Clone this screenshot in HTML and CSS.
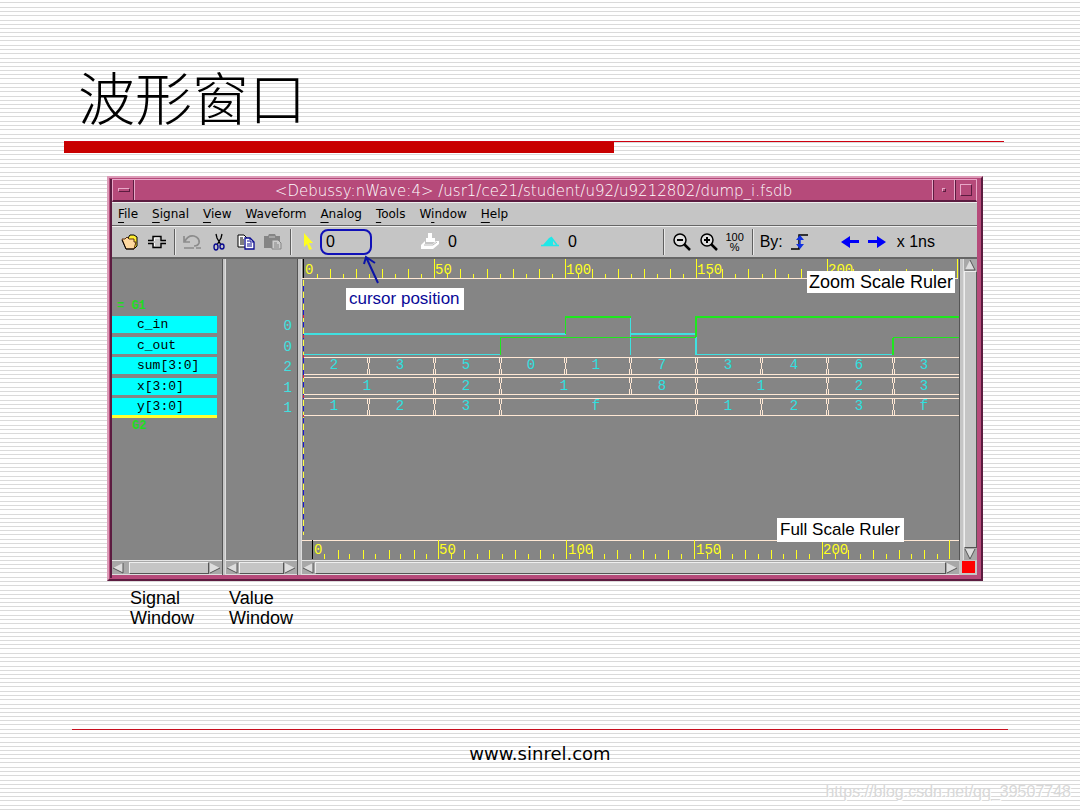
FILE: index.html
```html
<!DOCTYPE html>
<html lang="zh">
<head>
<meta charset="utf-8">
<title>波形窗口</title>
<link rel="stylesheet" href="styles.css">
</head>
<body>
<main class="slide">
  <header class="heading">
    <h1>波形窗口</h1>
    <div class="rule"></div>
  </header>

  <section class="window" aria-label="nWave">
    <div class="titlebar">
      <button class="tb-button" aria-label="Window menu"><span class="tb-dash"></span></button>
      <span class="title">&lt;Debussy:nWave:4&gt; /usr1/ce21/student/u92/u9212802/dump_i.fsdb</span>
      <button class="tb-button" aria-label="Minimize"><span class="tb-dot"></span></button>
      <button class="tb-button" aria-label="Maximize"><span class="tb-square"></span></button>
    </div>

    <nav class="menubar">
      <button><u>F</u>ile</button>
      <button><u>S</u>ignal</button>
      <button><u>V</u>iew</button>
      <button><u>W</u>aveform</button>
      <button><u>A</u>nalog</button>
      <button><u>T</u>ools</button>
      <button>W<u>i</u>ndow</button>
      <button><u>H</u>elp</button>
    </nav>

    <div class="toolbar">
      <button class="tool" aria-label="Open"><svg viewBox="0 0 20 20"><path d="M8 6l2-3h4l3 2v9l-3 3" fill="#ffee30" stroke="#000"/><path d="M2 7h3l2-2 2 2h5v3h2l-2 7H6z" fill="#ffd9a0" stroke="#5a3010"/><path d="M2 8l4 9h8" fill="none" stroke="#000"/></svg></button>
      <button class="tool" aria-label="Get signals"><svg viewBox="0 0 20 20"><path d="M1 8.500h5V4.500h8v4h5M1 11.500h5v4h8v-4h5" fill="none" stroke="#000" stroke-width="1.4"/><path d="M7.500 9V6h5M7.500 11v3" fill="none" stroke="#fff"/></svg></button>
      <span class="sep"></span>
      <button class="tool" aria-label="Undo"><svg viewBox="0 0 20 20"><path d="M2 4v6h6M3 9q3-6 9-5 6 2 5 7-1 3-5 3M2 16h10M14 16h5" fill="none" stroke="#8c8c8c" stroke-width="1.7"/></svg></button>
      <button class="tool" aria-label="Cut"><svg viewBox="0 0 20 20"><path d="M7 2l1 4 4 7M13 2l-1 4-4 7" fill="none" stroke="#000" stroke-width="1.3"/><ellipse cx="7" cy="15" rx="2" ry="3" fill="none" stroke="#0a0a90" stroke-width="1.4"/><ellipse cx="13" cy="14.500" rx="2" ry="2.500" fill="none" stroke="#0a0a90" stroke-width="1.4"/></svg></button>
      <button class="tool" aria-label="Copy"><svg viewBox="0 0 20 20"><path d="M2 3h6l3 3v9H2z" fill="#fff" stroke="#000"/><path d="M4 6h3M4 8h4M4 10h4M4 12h4" stroke="#000"/><path d="M9 6h5l4 4v7H9z" fill="#fff" stroke="#0a0a90" stroke-width="1.3"/><path d="M14 6v4h4M11 9h2M11 12h5M11 14h5" fill="none" stroke="#0a0a90"/></svg></button>
      <button class="tool" aria-label="Paste"><svg viewBox="0 0 20 20"><path d="M1 4h4l1-2h6l1 2h4v12H1z" fill="#858585"/><path d="M6 5h6" stroke="#c5c5c5"/><path d="M9 8h6l3 3v6H9z" fill="#ccc" stroke="#858585"/><path d="M11 11h3M11 13h5M11 15h5" stroke="#858585"/></svg></button>
      <span class="sep"></span>
      <label class="tool marker" for="cursor"><svg viewBox="0 0 20 20" role="img" aria-label="Cursor"><path d="M6 1v14l3-3 2 6 3-1-3-6h4z" fill="#ffff20"/></svg></label>
      <input class="entry entry-ring" id="cursor" value="0">
      <label class="tool spaced" for="mark"><svg viewBox="0 0 20 20" role="img" aria-label="Marker"><path d="M8 1h4v5h3v4H6V6h2z" fill="#fff"/><path d="M5 9L1 13v4h12l6-5V9h-3l-3 3H5z" fill="#fff"/><path d="M4 13h9l4-3" fill="none" stroke="#b8b8b8"/></svg></label>
      <input class="entry" id="mark" value="0">
      <label class="tool" for="delta"><svg viewBox="0 0 20 20" role="img" aria-label="Delta"><path d="M3 13l6-7 2-1 2 3v5z" fill="#20e8e8"/><path d="M11 5l6 8M1 13.500h18" stroke="#20e8e8" fill="none" stroke-width="1.500"/></svg></label>
      <input class="entry entry-grow" id="delta" value="0">
      <span class="sep"></span>
      <button class="tool" aria-label="Zoom out"><svg viewBox="0 0 20 20"><circle cx="9" cy="8" r="6" fill="#e0e0e0" stroke="#000" stroke-width="1.500"/><path d="M6 8h6" stroke="#000" stroke-width="2"/><path d="M13 12l6 6" stroke="#000" stroke-width="2.500"/></svg></button>
      <button class="tool" aria-label="Zoom in"><svg viewBox="0 0 20 20"><circle cx="9" cy="8" r="6" fill="#e0e0e0" stroke="#000" stroke-width="1.500"/><path d="M6 8h6M9 5v6" stroke="#000" stroke-width="2"/><path d="M13 12l6 6" stroke="#000" stroke-width="2.500"/></svg></button>
      <button class="tool zoom-all"><span>100</span><span>%</span></button>
      <span class="sep"></span>
      <button class="by">By:</button>
      <button class="tool" aria-label="Rising edge"><svg viewBox="0 0 20 20"><path d="M1 17h8V3h9" fill="none" stroke="#000" stroke-width="1.500"/><path d="M10 4v12" stroke="#1030e0" stroke-width="1.500"/><path d="M6 8l4-5 4 5zM6 12l4 5 4-5z" fill="#1030e0"/></svg></button>
      <button class="tool edge" aria-label="Previous"><svg viewBox="0 0 20 20"><path d="M0 10l9-6v4h9v3H9v5z" fill="#0000f8"/></svg></button>
      <button class="tool" aria-label="Next"><svg viewBox="0 0 20 20"><path d="M18 10l-9-6v4H0v3h9v5z" fill="#0000f8"/></svg></button>
      <span class="unit">x 1ns</span>
      <svg class="pointer" viewBox="0 0 20 30" aria-hidden="true"><path d="M16 28L4 2M2 9L4 2l9 6" fill="none" stroke="#0a12a8" stroke-width="2"/></svg>
    </div>

    <div class="panes">
      <div class="pane signals">
        <div class="group">= G1</div>
        <ul class="names">
          <li>c_in</li><li>c_out</li><li>sum[3:0]</li><li>x[3:0]</li><li>y[3:0]</li>
        </ul>
        <div class="insert-line"></div>
        <div class="group group-next">G2</div>
      </div>
      <div class="divider"></div>
      <div class="pane values">
        <ul class="value-list"><li>0</li><li>0</li><li>2</li><li>1</li><li>1</li></ul>
      </div>
      <div class="divider"></div>
      <div class="pane waves">
        <svg class="chart" viewBox="0 0 657 301" role="img" aria-label="Waveforms">
          <g class="line pale"><path d="M0 19.500H656M0 281.500H657"/></g>
          <g class="line ruler">
            <path d="M132.500 0V19M263.500 0V19M394.500 0V19M525.500 0V19M655.500 0V19"/>
            <path d="M15.500 15v4m26-4v4m26-4v4m26-4v4m26-4v4m26-4v4m26-4v4m27-4v4m26-4v4m26-4v4m26-4v4m27-4v4m26-4v4m26-4v4m26-4v4m26-4v4m26-4v4m27-4v4m26-4v4m26-4v4m26-4v4m26-4v4m26-4v4m27-4v4m26-4v4"/>
            <path d="M28.500 10v9m26-9v9m26-9v9m26-9v9m52-9v9m27-9v9m26-9v9m26-9v9m53-9v9m26-9v9m26-9v9m26-9v9m52-9v9m26-9v9m27-9v9m26-9v9m52-9v9m26-9v9m27-9v9m26-9v9"/>
            <path d="M136.500 281v19M264.500 281v19M392.500 281v19M520.500 281v19M647.500 281v19"/>
            <path d="M22.500 295v5m25-5v5m26-5v5m25-5v5m26-5v5m25-5v5m26-5v5m25-5v5m26-5v5m25-5v5m26-5v5m25-5v5m26-5v5m25-5v5m26-5v5m26-5v5m25-5v5m26-5v5m25-5v5m26-5v5m26-5v5m25-5v5m26-5v5m25-5v5m26-5v5"/>
            <path d="M36.500 291v9m25-9v9m26-9v9m25-9v9m50-9v9m25-9v9m26-9v9m25-9v9m52-9v9m25-9v9m26-9v9m25-9v9m52-9v9m25-9v9m26-9v9m25-9v9m52-9v9m25-9v9m26-9v9m25-9v9"/>
          </g>
          <path class="line black" d="M1.500 0V19M10.500 281V300"/>
          <g class="scale">
            <text x="3" y="15">0</text><text x="133" y="15">50</text><text x="264" y="15">100</text><text x="395" y="15">150</text><text x="526" y="15">200</text>
            <text x="12" y="295">0</text><text x="137" y="295">50</text><text x="266" y="295">100</text><text x="394" y="295">150</text><text x="521" y="295">200</text>
          </g>
          <g class="line low">
            <path class="thick" d="M1 75H264M328 75H394"/>
            <path d="M1 95.500H198M328.500 58V96M394 95.500H591"/>
            <path class="thick" d="M394 78V96"/>
          </g>
          <g class="line high">
            <path class="thick" d="M263 58H329M394 78V58H657M591 96V79"/>
            <path d="M263.500 75V58M198.500 96V78.500H394M591 78.500H657"/>
          </g>
          <g class="line pale">
            <path d="M1 98.500H657M1 115.500H657M1 118.500H657M1 135.500H657M1 139.500H657M1 156.500H657"/>
            <path d="M65 99l3 16m0-16l-3 16M131 99l3 16m0-16l-3 16M197 99l3 16m0-16l-3 16M262 99l3 16m0-16l-3 16M327 99l3 16m0-16l-3 16M393 99l3 16m0-16l-3 16M458 99l3 16m0-16l-3 16M524 99l3 16m0-16l-3 16M590 99l3 16m0-16l-3 16"/>
            <path d="M131 119l3 16m0-16l-3 16M197 119l3 16m0-16l-3 16M327 119l3 16m0-16l-3 16M393 119l3 16m0-16l-3 16M524 119l3 16m0-16l-3 16M590 119l3 16m0-16l-3 16"/>
            <path d="M65 140l3 16m0-16l-3 16M131 140l3 16m0-16l-3 16M197 140l3 16m0-16l-3 16M393 140l3 16m0-16l-3 16M458 140l3 16m0-16l-3 16M524 140l3 16m0-16l-3 16M590 140l3 16m0-16l-3 16"/>
          </g>
          <g class="bus">
            <text x="32" y="110">2</text><text x="98" y="110">3</text><text x="164" y="110">5</text><text x="229" y="110">0</text><text x="294" y="110">1</text><text x="360" y="110">7</text><text x="426" y="110">3</text><text x="492" y="110">4</text><text x="557" y="110">6</text><text x="622" y="110">3</text>
            <text x="65" y="131">1</text><text x="164" y="131">2</text><text x="262" y="131">1</text><text x="360" y="131">8</text><text x="459" y="131">1</text><text x="557" y="131">2</text><text x="622" y="131">3</text>
            <text x="32" y="151">1</text><text x="98" y="151">2</text><text x="164" y="151">3</text><text x="294" y="151">f</text><text x="426" y="151">1</text><text x="492" y="151">2</text><text x="557" y="151">3</text><text x="622" y="151">f</text>
          </g>
          <path class="line time-a" d="M1.500 21V276"/>
          <path class="line time-b" d="M1.500 21V276"/>
          <path class="line time-c" d="M1.500 56V158"/>
        </svg>
        <span class="note note-cursor">cursor position</span>
        <span class="note note-zoom">Zoom Scale Ruler</span>
        <span class="note note-full">Full Scale Ruler</span>
      </div>
      <div class="divider"></div>
      <div class="scroll scroll-v">
        <button aria-label="Scroll up"><svg viewBox="0 0 12 12"><path d="M6 1L1 11h10z" fill="#ddd"/><path d="M6 1l5 10H1" fill="none" stroke="#555"/></svg></button>
        <div class="thumb"></div>
        <button aria-label="Scroll down"><svg viewBox="0 0 12 12"><path d="M1 1h10L6 11z" fill="#ddd"/><path d="M11 1L6 11 1 1" fill="none" stroke="#555"/></svg></button>
      </div>

      <div class="scroll">
        <button aria-label="Signals left"><svg viewBox="0 0 12 12"><path d="M1 6l10-5v10z" fill="#ddd"/><path d="M1 6l10 5V1" fill="none" stroke="#555"/></svg></button>
        <div class="thumb thumb-inset"></div>
        <button aria-label="Signals right"><svg viewBox="0 0 12 12"><path d="M11 6L1 1v10z" fill="#ddd"/><path d="M1 11l10-5" fill="none" stroke="#555"/></svg></button>
      </div>
      <div class="divider"></div>
      <div class="scroll">
        <button aria-label="Values left"><svg viewBox="0 0 12 12"><path d="M1 6l10-5v10z" fill="#ddd"/><path d="M1 6l10 5V1" fill="none" stroke="#555"/></svg></button>
        <div class="thumb"></div>
        <button aria-label="Values right"><svg viewBox="0 0 12 12"><path d="M11 6L1 1v10z" fill="#ddd"/><path d="M1 11l10-5" fill="none" stroke="#555"/></svg></button>
      </div>
      <div class="divider"></div>
      <div class="scroll">
        <button aria-label="Waves left"><svg viewBox="0 0 12 12"><path d="M1 6l10-5v10z" fill="#ddd"/><path d="M1 6l10 5V1" fill="none" stroke="#555"/></svg></button>
        <div class="thumb"></div>
        <button aria-label="Waves right"><svg viewBox="0 0 12 12"><path d="M11 6L1 1v10z" fill="#ddd"/><path d="M1 11l10-5" fill="none" stroke="#555"/></svg></button>
      </div>
      <div class="corner"><span class="stop"></span></div>
    </div>
  </section>

  <div class="captions">
    <p>Signal<br>Window</p>
    <p>Value<br>Window</p>
  </div>

  <footer class="footer">www.sinrel.com</footer>
  <span class="watermark">https://blog.csdn.net/qq_39507748</span>
</main>
</body>
</html>
```
FILE: styles.css
```css
* { box-sizing: border-box; }
body {
  margin: 0;
  color: #000;
  font-family: "Liberation Sans", "Noto Sans CJK SC", sans-serif;
  background: #fff;
}
button { margin: 0; padding: 0; border: 0; background: none; color: inherit; font: inherit; }
ul { margin: 0; padding: 0; list-style: none; }
svg { display: block; }

.slide {
  position: relative;
  display: flex;
  flex-direction: column;
  min-height: 100vh;
  background: repeating-linear-gradient(
    #fff 0 2px, #dadada 2px 3px, #fff 3px 7px, #dadada 7px 8px, #fff 8px 11px, #dadada 11px 12px,
    #fff 12px 15px, #dadada 15px 16px, #fff 16px 20px, #dadada 20px 21px, #fff 21px 24px, #dadada 24px 25px,
    #fff 25px 28px, #dadada 28px 29px, #fff 29px 32px, #dadada 32px 33px, #fff 33px 36px, #dadada 36px 37px, #fff 37px 38px);
}

.heading { padding: 56px 76px 0 64px; }
.heading h1 {
  margin: 0;
  padding-left: 14px;
  height: 85px;
  font: 300 57px/78px "Noto Sans CJK SC", sans-serif;
}
.rule { height: 12px; border-top: 1px solid #d00010; background: linear-gradient(#c80000, #c80000) 0 0 / 550px 100% no-repeat; }

.window {
  margin: 23px 97px 0 107px;
  border: 2px solid;
  border-color: #dc9cb8 #5c1c40 #5c1c40 #dc9cb8;
  padding: 1px 4px 4px 3px;
  background: #b64a7a;
  box-shadow: inset 0 0 0 1px #b64a7a, inset 3px 0 #5c1c40;
}
.titlebar { display: flex; height: 23px; border: 1px solid #e8a8c8; border-bottom: 2px solid #5c1c40; color: #fff; background: #b64a7a; }
.title { flex: 1; text-align: center; font: 200 15px/22px "DejaVu Sans", sans-serif; white-space: nowrap; }
.tb-button { display: grid; place-items: center; width: 22px; border-right: 1px solid #e8a8c8; box-shadow: inset -1px 0 #5c1c40; }
.title ~ .tb-button { border-right: 0; border-left: 1px solid #e8a8c8; box-shadow: inset 1px 0 #5c1c40; }
.tb-dash, .tb-dot, .tb-square { border: 1px solid; border-color: #e8a8c8 #5c1c40 #5c1c40 #e8a8c8; }
.tb-dash { width: 12px; height: 4px; }
.tb-dot { width: 4px; height: 4px; }
.tb-square { width: 12px; height: 12px; }

.menubar { display: flex; gap: 14px; height: 24px; padding: 0 6px; border-top: 1px solid #eee; border-bottom: 1px solid #666; background: #c5c5c5; font: 12px/22px "DejaVu Sans", sans-serif; }
.menubar u { text-underline-offset: 4px; }

.toolbar { position: relative; display: flex; align-items: center; gap: 7px; height: 33px; padding-left: 8px; border-top: 1px solid #eee; border-bottom: 2px solid #666; background: #c5c5c5; }
.tool { flex: none; width: 20px; height: 20px; }
.tool svg { width: 20px; height: 20px; }
.sep { width: 1px; height: 26px; background: #606060; box-shadow: 1px 0 #e8e8e8; }
.marker { margin-right: -5px; }
.spaced { margin-left: 41px; }
.entry { width: 86px; height: 26px; padding: 0 0 0 1px; border: 0; background: none; color: #000; font: 16px "Liberation Sans", sans-serif; }
.entry-ring { width: 52px; padding-left: 4px; border: 2px solid #1010b8; border-radius: 8px; }
.entry-grow { flex: 1; min-width: 0; }
.zoom-all { display: grid; justify-items: center; font: 11px/10px "Liberation Sans", sans-serif; }
.by, .unit { font: 16px/20px "Liberation Sans", sans-serif; }
.edge { margin-left: 24px; }
.unit { flex: none; padding-left: 2px; margin-right: 42px; }
.pointer { position: absolute; z-index: 2; left: 250px; top: 28px; width: 20px; height: 30px; }

.panes { display: grid; grid-template-columns: 110px 4px 71px 5px 1fr 5px 13px; grid-template-rows: auto 15px; background: #c5c5c5; }
.pane { background: #858585; font: 13px/17px "Liberation Mono", monospace; }
.divider { border-left: 1px solid #555; border-right: 1px solid #ddd; background: #c5c5c5; }
.signals { padding: 39px 5px 0 0; }
.group { height: 18px; padding-left: 5px; color: #20dd20; font-size: 12px; font-weight: bold; }
.group-next { padding-left: 20px; }
.names, .value-list { display: flex; flex-direction: column; justify-content: space-between; height: 99px; }
.names li { height: 17px; padding-left: 25px; background: #0ff; font-size: 13px; line-height: 18px; }
.insert-line { height: 3px; background: #ffff30; }
.values { padding: 57px 5px 0 0; color: #40e0e0; text-align: right; }
.value-list li { height: 17px; font-size: 14px; line-height: 20px; }

.waves { position: relative; }
.chart { width: 100%; height: auto; }
.line { fill: none; stroke-width: 1px; shape-rendering: crispEdges; }
.pale { stroke: #ffe8d4; }
.ruler { stroke: #ff2; }
.black { stroke: #000; }
.low { stroke: #40e0e0; }
.high { stroke: #1ee81e; }
.thick { stroke-width: 2px; }
.scale text { fill: #ff2; font: 14px "Liberation Mono", monospace; }
.bus text { fill: #30e0e0; font: 14px "Liberation Mono", monospace; text-anchor: middle; }
.time-a { stroke: #ff4; stroke-dasharray: 6 6; }
.time-b { stroke: #1818d0; stroke-dasharray: 5 7; stroke-dashoffset: 6; }
.time-c { stroke: #e02040; stroke-dasharray: 3 17; }
.note { position: absolute; padding: 0 4px 0 3px; background: #fff; font: 17px/22px "Liberation Sans", sans-serif; white-space: nowrap; }
.note-cursor { left: 44px; top: 29px; color: #0a0a98; }
.note-zoom { right: 4px; top: 12px; padding: 0 2px; font-size: 18px; }
.note-full { right: 55px; top: 259px; line-height: 24px; }

.scroll { display: flex; padding-top: 1px; border-bottom: 1px solid #ddd; background: #a8a8a8; border-top: 1px solid #e4e4e4; }
.scroll button { flex: none; width: 13px; height: 12px; }
.scroll svg { width: 12px; height: 12px; }
.thumb { flex: 1; border: 1px solid; border-color: #eee #555 #555 #eee; background: #c5c5c5; }
.thumb-inset { margin-left: 4px; }
.scroll-v { flex-direction: column; padding: 0; border: 0; }
.corner { grid-column: 6 / 8; padding: 1px 3px; }
.stop { display: block; width: 13px; height: 12px; background: #f00; }

.captions { display: grid; grid-template-columns: 99px auto; padding: 7px 0 0 130px; font-size: 18px; line-height: 20px; }
.captions p { margin: 0; }

.footer { margin: auto 72px 0; height: 81px; padding-top: 13px; border-top: 1px solid #c81020; text-align: center; font: 18px/22px "DejaVu Sans", sans-serif; }
.watermark { position: absolute; right: 9px; bottom: 9px; color: #d8d8d8; font-size: 16px; line-height: 18px; text-shadow: 1px 1px #fff; }
```
